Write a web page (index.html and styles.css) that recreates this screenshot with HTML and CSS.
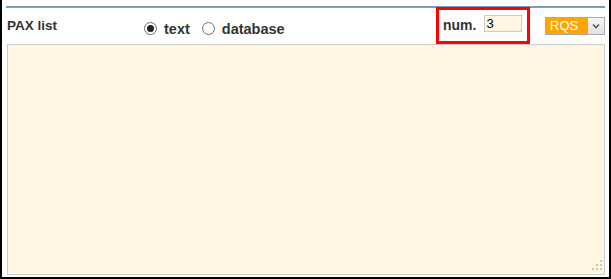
FILE: index.html
```html
<!DOCTYPE html>
<html>

<head>
    <title>PAX list</title>
    <meta charset="UTF-8" />
    <link rel="stylesheet" href="styles.css">
</head>

<body>
    <div class="pax">
        <div class="pax__head">
            <span class="pax__title">PAX list</span>

            <div class="pax__source">
                <label class="pax__option">
                    <span class="radio radio--checked"></span>
                    text
                </label>
                <label class="pax__option">
                    <span class="radio"></span>
                    database
                </label>
            </div>

            <!-- highlighted field -->
            <div class="pax__num">
                <span class="pax__num--label">num.</span>
                <span class="pax__num--input">3</span>
            </div>

            <div class="pax__select">
                <span class="pax__select--value">RQS</span>
                <span class="pax__select--btn">
                    <svg width="8" height="6" viewBox="0 0 8 6">
                        <polyline points="1,1.5 4,4.5 7,1.5" fill="none" stroke="#555" stroke-width="1.6" />
                    </svg>
                </span>
            </div>
        </div>

        <div class="pax__text">
            <svg class="pax__grip" width="12" height="12" viewBox="0 0 12 12">
                <rect x="9" y="1" width="2" height="2" />
                <rect x="5" y="5" width="2" height="2" />
                <rect x="9" y="5" width="2" height="2" />
                <rect x="1" y="9" width="2" height="2" />
                <rect x="5" y="9" width="2" height="2" />
                <rect x="9" y="9" width="2" height="2" />
            </svg>
        </div>
    </div>
</body>

</html>
```

FILE: styles.css
```css
:root {
    --line: #7f9db9;
    --cream: #fff5e0;
    --field-border: #cbcbcb;
    --label: #333;
    --orange: #ffa500;
}

body {
    margin: 0;
    font-family: "Liberation Sans", Arial, sans-serif;
}

.pax {
    width: 611px;
    height: 279px;
    box-sizing: border-box;
    border: 2px solid #000;
    border-top: none;
    padding: 6px 4px 0 4px;
}

/* Header row - START */
.pax__head {
    border-top: 2px solid var(--line);
    height: 36px;
    display: flex;
    align-items: flex-start;
}

.pax__title {
    width: 137px;
    padding-left: 1px;
    margin-top: 10px;
    font-size: 13.5px;
    line-height: 15px;
    font-weight: bold;
    color: var(--label);
}

.pax__source {
    display: flex;
    margin-top: 13px;
}

.pax__option {
    display: flex;
    align-items: center;
    gap: 7px;
    margin-right: 12px;
    font-size: 14.5px;
    line-height: 16px;
    font-weight: bold;
    color: var(--label);
}

.radio {
    position: relative;
    width: 11px;
    height: 11px;
    border: 1px solid #6e6e6e;
    border-radius: 50%;
    background-color: #fff;
    margin-top: -2px;
}

.radio--checked::after {
    content: '';
    position: absolute;
    top: 2px;
    left: 2px;
    width: 7px;
    height: 7px;
    border-radius: 50%;
    background-color: #222;
}

.pax__num {
    margin-left: auto;
    width: 84px;
    height: 31px;
    border: 3px solid #f00;
    margin-top: -1px;
    display: flex;
    align-items: flex-start;
    padding-left: 4px;
}

.pax__num--label {
    margin-top: 7px;
    font-size: 14px;
    line-height: 16px;
    font-weight: bold;
    color: var(--label);
}

.pax__num--input {
    margin: 5px 0 0 8px;
    width: 35px;
    height: 15px;
    border: 1px solid var(--field-border);
    background-color: var(--cream);
    font-size: 13px;
    line-height: 15px;
    padding-left: 1px;
}

.pax__select {
    margin: 9px 0 0 15px;
    width: 58px;
    height: 16px;
    border: 1px solid #aaa;
    display: flex;
}

.pax__select--value {
    flex: 1;
    background-color: var(--orange);
    color: #fff;
    font-size: 13px;
    line-height: 16px;
    padding-left: 4px;
}

.pax__select--btn {
    width: 16px;
    border-left: 1px solid #aaa;
    background: linear-gradient(#f6f6f6, #e2e2e2);
    display: flex;
    align-items: center;
    justify-content: center;
}

/* Header row - END */

/* Text area - START */
.pax__text {
    position: relative;
    margin-left: 1px;
    width: 598px;
    height: 231px;
    box-sizing: border-box;
    border: 1px solid var(--field-border);
    background-color: var(--cream);
}

.pax__grip {
    position: absolute;
    right: 1px;
    bottom: 3px;
    fill: #cfc8b8;
}

/* Text area - END */
```
